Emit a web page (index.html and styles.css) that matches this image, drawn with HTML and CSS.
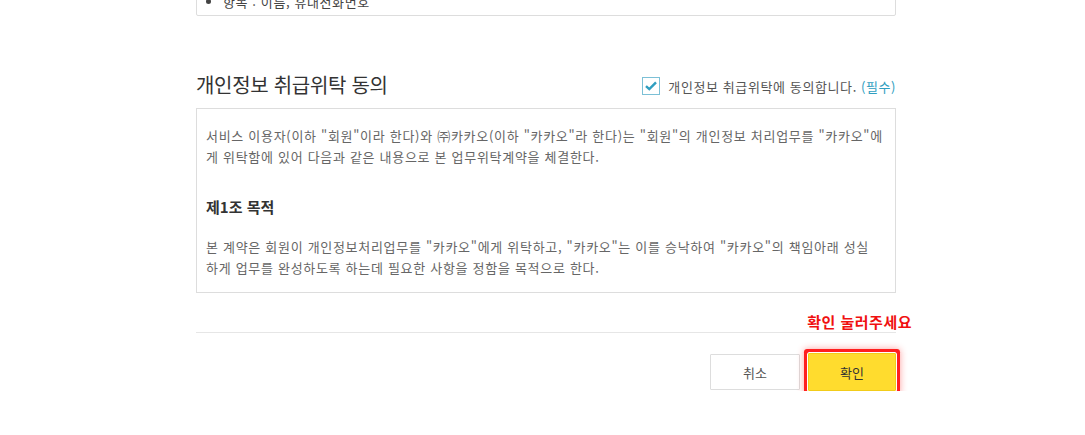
FILE: index.html
```html
<!DOCTYPE html>
<html lang="ko">
<head>
  <meta charset="UTF-8">
  <title>개인정보 취급위탁 동의</title>
  <link rel="stylesheet" href="styles.css">
</head>
<body>
  <div class="wrap">
    <div class="prev-box">
      <ul>
        <li>항목 : 이름, 휴대전화번호</li>
      </ul>
    </div>

    <div class="agree-head">
      <h2>개인정보 취급위탁 동의</h2>
      <label class="check">
        <span class="box">
          <svg width="12" height="10" viewBox="0 0 12 10"><path d="M1 5.2 L4.3 8.2 L11 1.4" fill="none" stroke="#2f9ec0" stroke-width="2.4"/></svg>
        </span>
        개인정보 취급위탁에 동의합니다. <em>(필수)</em>
      </label>
    </div>

    <div class="terms">
      <p>서비스 이용자(이하 "회원"이라 한다)와 ㈜카카오(이하 "카카오"라 한다)는 "회원"의 개인정보 처리업무를 "카카오"에게 위탁함에 있어 다음과 같은 내용으로 본 업무위탁계약을 체결한다.</p>
      <h3>제1조 목적</h3>
      <p class="tight">본 계약은 회원이 개인정보처리업무를 "카카오"에게 위탁하고, "카카오"는 이를 승낙하여 "카카오"의 책임아래 성실하게 업무를 완성하도록 하는데 필요한 사항을 정함을 목적으로 한다.</p>
      <h3>제2조 위탁업무의 목적 및 범위</h3>
      <p>"카카오"는 계약이 정하는 바에 따라 서비스 제공 목적으로 다음과 같은 개인정보 처리 업무를 수행한다.</p>
    </div>

    <div class="notice">확인 눌러주세요</div>

    <div class="actions">
      <button class="btn">취소</button>
      <button class="btn ok">확인</button>
    </div>
  </div>
</body>
</html>
```

FILE: styles.css
```css
body {
  margin: 0;
  background: #fff;
  font-family: "Noto Sans CJK KR", "Noto Sans", sans-serif;
  color: #333;
}

.wrap {
  width: 700px;
  margin-left: 196px;
}

.prev-box {
  height: 28px;
  margin-top: -12px;
  border: 1px solid #ddd;
  border-radius: 0 0 2px 2px;
  box-sizing: border-box;
}
.prev-box ul {
  margin: 0;
  padding: 0 0 0 26px;
  font-size: 13px;
  line-height: 26px;
  color: #444;
  letter-spacing: 0.6px;
}

.agree-head {
  display: flex;
  justify-content: space-between;
  align-items: center;
  margin-top: 56px;
  height: 24px;
}
.agree-head h2 {
  margin: 0;
  font-size: 20px;
  font-weight: 400;
  color: #333;
  letter-spacing: -0.3px;
}

.check {
  display: flex;
  align-items: center;
  font-size: 13px;
  color: #555;
  margin-top: 4px;
  letter-spacing: 0.6px;
}
.check .box {
  width: 16px;
  height: 16px;
  border: 1px solid #7cc0d6;
  margin-right: 8px;
  display: flex;
  align-items: center;
  justify-content: center;
}
.check em {
  font-style: normal;
  color: #2f9ec0;
  margin-left: 4px;
}

.terms {
  margin-top: 12px;
  height: 185px;
  box-sizing: border-box;
  border: 1px solid #ddd;
  padding: 16px 8px 0 9px;
  overflow-y: scroll;
  font-size: 13px;
  color: #666;
  line-height: 21px;
  letter-spacing: 0.7px;
}
.terms p {
  margin: 0;
}
.terms .tight {
  padding-right: 12px;
}
.terms::-webkit-scrollbar {
  width: 14px;
}
.terms::-webkit-scrollbar-thumb {
  background: #ccc;
  border-radius: 4px;
  border: 4px solid #fff;
  border-right-width: 3px;
  min-height: 48px;
}
.terms h3 {
  margin: 30px 0 19px;
  font-size: 15px;
  font-weight: 700;
  color: #333;
  line-height: 20px;
  letter-spacing: 0;
}

.notice {
  margin-top: 19px;
  text-align: right;
  margin-right: -16px;
  color: #f01010;
  font-size: 15px;
  font-weight: 700;
  line-height: 20px;
  letter-spacing: 0.5px;
}

.actions {
  border-top: 1px solid #e6e6e6;
  padding-top: 20px;
  display: flex;
  justify-content: flex-end;
  align-items: center;
}
.btn {
  width: 90px;
  height: 36px;
  background: #fff;
  border: 1px solid #ddd;
  border-radius: 1px;
  font-family: inherit;
  font-size: 13px;
  color: #555;
}
.btn.ok {
  margin-left: 8px;
  width: 88px;
  height: 38px;
  background: #ffdc2e;
  border-color: #f2cc1a;
  color: #333;
  outline: 3px solid #ff1f1f;
  outline-offset: 1px;
  box-shadow: 0 0 0 1px #fff, 0 0 0 4px #ff1f1f, 0 0 7px 4px rgba(255, 40, 40, 0.45);
}
```
